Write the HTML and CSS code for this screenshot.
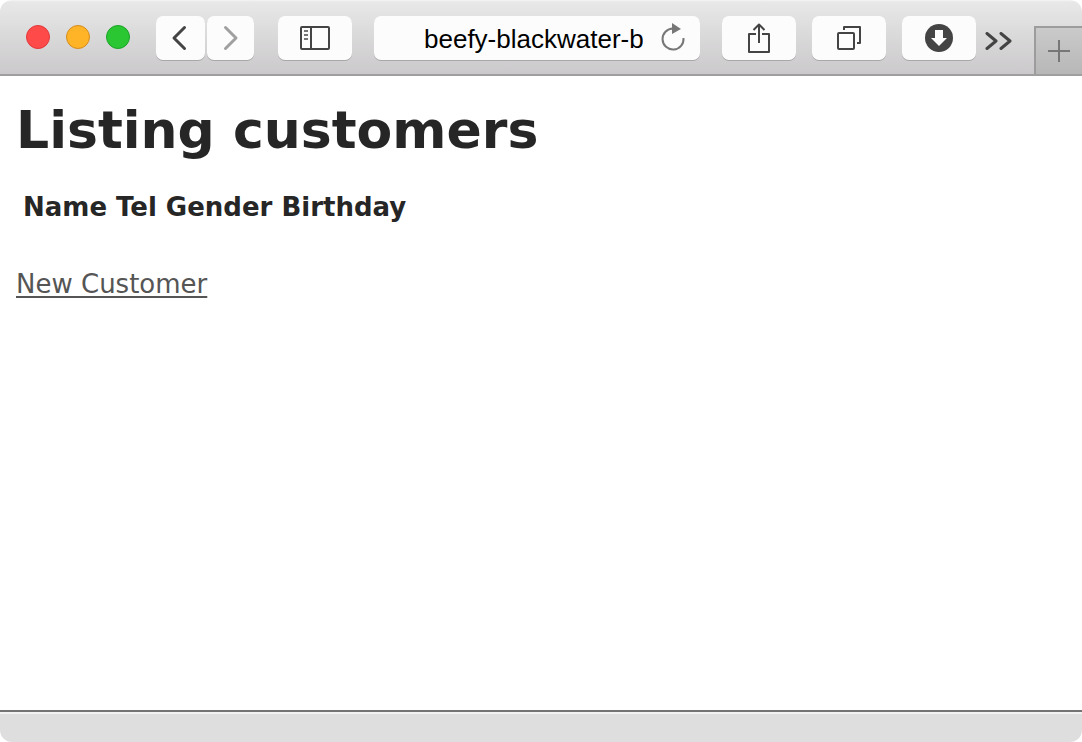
FILE: index.html
```html
<!DOCTYPE html>
<html lang="en">
<head>
<meta charset="utf-8">
<title>Listing customers</title>
<link rel="stylesheet" href="styles.css">
</head>
<body>
<div class="window">
  <header class="toolbar">
    <div class="lights">
      <button class="light light-close" aria-label="Close"></button>
      <button class="light light-minimize" aria-label="Minimize"></button>
      <button class="light light-zoom" aria-label="Zoom"></button>
    </div>
    <div class="history">
      <button class="tool back" aria-label="Back">
        <svg width="16" height="26" viewBox="0 0 16 26"><path d="M13.500 2.500 3 13l10.500 10.500" fill="none" stroke="#444" stroke-width="3" stroke-linecap="round" stroke-linejoin="round"/></svg>
      </button>
      <button class="tool forward" aria-label="Forward">
        <svg width="16" height="26" viewBox="0 0 16 26"><path d="M2.500 2.500 13 13 2.500 23.500" fill="none" stroke="#a0a0a0" stroke-width="3" stroke-linecap="round" stroke-linejoin="round"/></svg>
      </button>
    </div>
    <button class="tool" aria-label="Show sidebar">
      <svg width="30" height="24" viewBox="0 0 30 24" fill="none" stroke="#444" stroke-width="2"><rect x="1" y="1" width="28" height="22" rx="1"/><path d="M11 1v22"/><path d="M4 5h4M4 9h4M4 13h4" stroke="#777"/></svg>
    </button>
    <div class="address">
      <input class="url" type="text" aria-label="Address" value="beefy-blackwater-b" spellcheck="false">
      <button class="reload" aria-label="Reload">
        <svg width="24" height="28" viewBox="0 0 24 28"><path d="M12 5.500A10.500 10.500 0 1 0 22.500 15" fill="none" stroke="#777" stroke-width="2"/><path d="M11 0 20 6 11 11z" fill="#777"/></svg>
      </button>
    </div>
    <div class="actions">
      <button class="tool" aria-label="Share">
        <svg width="22" height="30" viewBox="0 0 22 30" fill="none" stroke="#444" stroke-width="2" stroke-linejoin="round"><path d="M8 11H1v18h20V11h-7M11 20V2M5.500 7 11 1.500 16.500 7"/></svg>
      </button>
      <button class="tool" aria-label="Show all tabs">
        <svg width="24" height="24" viewBox="0 0 24 24" fill="none" stroke="#444" stroke-width="2" stroke-linejoin="round"><rect x="1" y="7" width="16" height="16" rx="1"/><path d="M7 4V1h16v16h-3"/></svg>
      </button>
      <button class="tool" aria-label="Downloads">
        <svg width="28" height="28" viewBox="0 0 28 28"><circle cx="14" cy="14" r="14" fill="#444"/><path d="M10 6h8v8h4l-8 8-8-8h4z" fill="#fcfcfc"/></svg>
      </button>
    </div>
    <button class="more" aria-label="More tools">
      <svg width="28" height="18" viewBox="0 0 28 18"><path d="M2 1.500 11 9l-9 7.500M16 1.500 25 9l-9 7.500" fill="none" stroke="#444" stroke-width="3" stroke-linecap="round" stroke-linejoin="round"/></svg>
    </button>
    <button class="new-tab" aria-label="New tab">
      <svg width="22" height="22" viewBox="0 0 22 22"><path d="M11 0v22M0 11h22" fill="none" stroke="#777" stroke-width="2"/></svg>
    </button>
  </header>
  <main class="page">
    <h1 class="title">Listing customers</h1>
    <table class="customers">
      <thead>
        <tr><th>Name</th><th>Tel</th><th>Gender</th><th>Birthday</th></tr>
      </thead>
    </table>
    <a class="new-link" href="#">New Customer</a>
  </main>
  <footer class="statusbar"></footer>
</div>
</body>
</html>
```

FILE: styles.css
```css
* {
  box-sizing: border-box;
}

body {
  margin: 0;
  background: #fff;
  color: #262626;
  font: 26px/32px Verdana, "DejaVu Sans", sans-serif;
}

button {
  padding: 0;
  border: 0;
  background: none;
}

svg {
  display: block;
}

.window {
  display: flex;
  flex-direction: column;
  min-height: 100vh;
  border-radius: 12px;
  overflow: hidden;
}

.toolbar {
  display: flex;
  align-items: flex-start;
  height: 76px;
  padding: 16px 0 0 26px;
  border-bottom: 2px solid #a09fa0;
  background: linear-gradient(#f5f5f5 0, #e8e8e8 2px, #cbc9cb 100%);
}

.lights {
  display: flex;
  gap: 16px;
  padding-top: 9px;
  margin-right: 26px;
}

.light {
  width: 24px;
  height: 24px;
  border-radius: 50%;
}

.light-close {
  border: 1px solid #e0383b;
  background: #ff4a4a;
}

.light-minimize {
  border: 1px solid #d48c1d;
  background: #ffb327;
}

.light-zoom {
  border: 1px solid #1ba229;
  background: #2ac732;
}

.history {
  display: flex;
  gap: 2px;
  margin-right: 24px;
}

.tool {
  display: flex;
  align-items: center;
  justify-content: center;
  width: 74px;
  height: 44px;
  border-radius: 7px;
  background: #fcfcfc;
  box-shadow: 0 1px 0 #a9a8a9;
}

.back {
  width: 49px;
  padding-right: 4px;
}

.forward {
  width: 47px;
}

.address {
  display: flex;
  flex: 1;
  align-items: center;
  min-width: 0;
  height: 44px;
  margin: 0 22px;
  padding: 0 15px 0 50px;
  border-radius: 7px;
  background: #fcfcfc;
  box-shadow: 0 1px 0 #a9a8a9;
}

.url {
  flex: 1;
  min-width: 0;
  height: 44px;
  margin-right: 18px;
  padding: 2px 0 0;
  border: 0;
  outline: 0;
  background: none;
  color: #000;
  font: 26px "Helvetica Neue", "Liberation Sans", Arial, sans-serif;
}

.reload {
  padding-bottom: 2px;
}

.actions {
  display: flex;
  gap: 16px;
}

.more {
  margin: 16px 21px 0 9px;
}

.new-tab {
  display: flex;
  align-items: center;
  justify-content: center;
  width: 48px;
  height: 48px;
  margin-top: 10px;
  border-top: 2px solid #9c9c9c;
  border-left: 2px solid #9c9c9c;
  background: linear-gradient(#cacaca, #b7b7b7);
}

.page {
  flex: 1;
  padding: 22px 16px;
}

.title {
  margin: 0;
  font-size: 52px;
  line-height: 64px;
}

.customers {
  margin: 24px 0 40px;
  border-spacing: 5px;
}

.customers th {
  padding: 0 2px;
  font-weight: bold;
}

.new-link {
  color: #555;
  text-decoration-thickness: 2px;
  text-underline-offset: 3px;
}

.statusbar {
  height: 32px;
  border-top: 2px solid #737373;
  background: linear-gradient(#f2f2f2 2px, #dedede 2px);
}
```
